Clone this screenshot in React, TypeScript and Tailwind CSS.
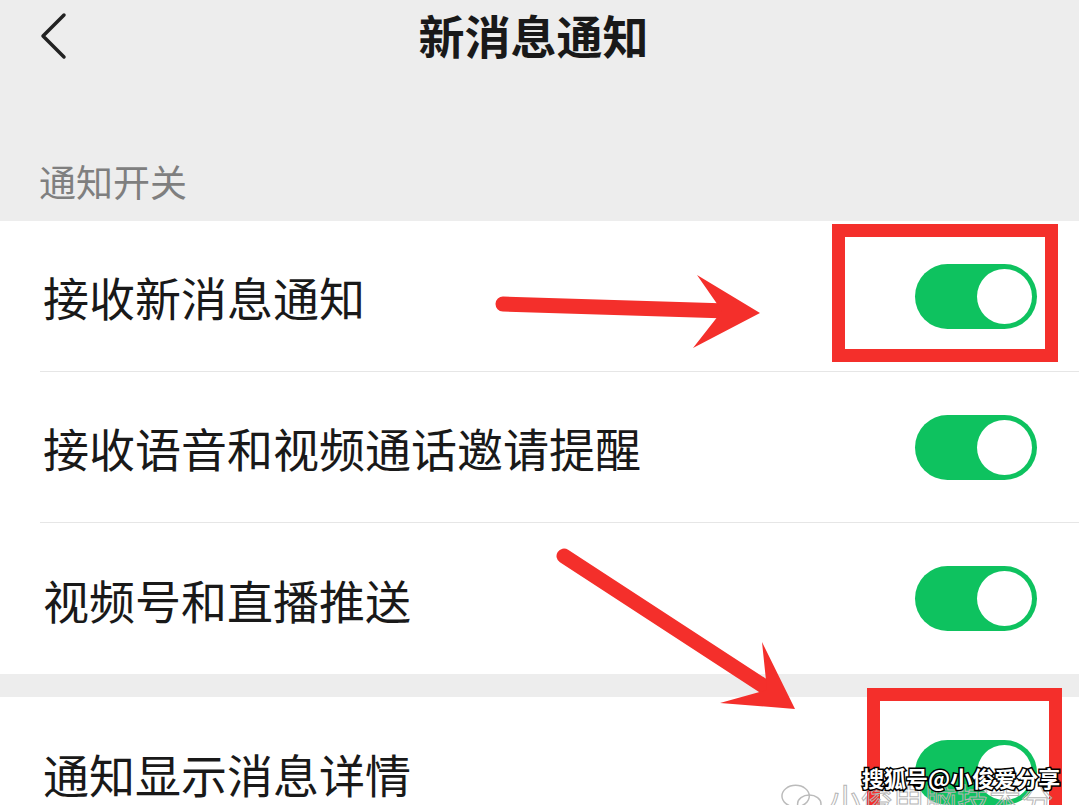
import React from "react";

const rows = ["接收新消息通知", "接收语音和视频通话邀请提醒", "视频号和直播推送"];

function Toggle() {
  return (
    <div className="flex h-[65px] w-[122px] shrink-0 items-center justify-end rounded-full bg-[#0ec25f] pr-[5px]">
      <div className="h-[55px] w-[55px] rounded-full bg-white" />
    </div>
  );
}

function Row({ label, last = false }: { label: string; last?: boolean }) {
  return (
    <div className="pl-[40px]">
      <div
        className={`flex h-[151px] items-center justify-between pr-[42px] pl-[3px] ${
          last ? "" : "border-b border-[#e6e6e6]"
        }`}
      >
        <span className="text-[46px] leading-none text-[#191919]">{label}</span>
        <Toggle />
      </div>
    </div>
  );
}

export default function App() {
  return (
    <div
      className="relative h-[805px] w-[1079px] overflow-hidden bg-white"
      style={{ fontFamily: '"Noto Sans CJK SC", "Noto Sans", sans-serif' }}
    >
      <div className="flex h-[221px] flex-col bg-[#ededed]">
        <div className="relative flex h-[68px] items-center justify-center pr-[12px]">
          <svg className="absolute left-[36px] top-[12px]" width="34" height="50" viewBox="0 0 34 50">
            <path d="M28 3 L7 24 L28 45" fill="none" stroke="#222" strokeWidth="3.5" strokeLinecap="round" strokeLinejoin="round" />
          </svg>
          <span className="text-[46px] font-bold leading-none text-[#191919]">新消息通知</span>
        </div>
        <div className="flex flex-1 items-end pb-[21px] pl-[39px]">
          <span className="text-[37px] leading-none text-[#7f7f7f]">通知开关</span>
        </div>
      </div>

      <div className="bg-white">
        {rows.map((r, i) => (
          <Row key={r} label={r} last={i === rows.length - 1} />
        ))}
      </div>
      <div className="h-[23px] bg-[#ededed]" />
      <Row label="通知显示消息详情" last />

      {/* annotations */}
      <div className="absolute left-[832px] top-[224px] h-[138px] w-[226px] border-[13px] border-[#f42f2b]" />
      <div className="absolute left-[867px] top-[688px] h-[140px] w-[195px] border-[13px] border-[#f42f2b]" />

      <svg className="pointer-events-none absolute left-0 top-0" width="1079" height="805" viewBox="0 0 1079 805">
        <line x1="503" y1="304" x2="728" y2="311" stroke="#f42f2b" strokeWidth="15" strokeLinecap="round" />
        <polygon points="697,275 760,313 693,348 722,311" fill="#f42f2b" />
        <line x1="564" y1="556" x2="765" y2="687" stroke="#f42f2b" strokeWidth="15" strokeLinecap="round" />
        <polygon points="762,642 795,709 720,703 767,690" fill="#f42f2b" />
      </svg>

      <div className="absolute left-[780px] top-[782px] flex items-start gap-[6px]">
        <svg width="44" height="34" viewBox="0 0 44 34">
          <ellipse cx="16" cy="14" rx="14" ry="11" fill="none" stroke="#bbb" strokeWidth="1.5" />
          <ellipse cx="30" cy="22" rx="12" ry="9" fill="none" stroke="#bbb" strokeWidth="1.5" />
        </svg>
        <span className="text-[32px] leading-none text-transparent [-webkit-text-stroke:1px_#b5b5b5]">小俊电脑技术分享</span>
      </div>
      <div className="absolute left-[862px] top-[766px] text-[22px] font-bold leading-none text-white [-webkit-text-stroke:3px_#000] [paint-order:stroke_fill]">
        搜狐号@小俊爱分享
      </div>
    </div>
  );
}
